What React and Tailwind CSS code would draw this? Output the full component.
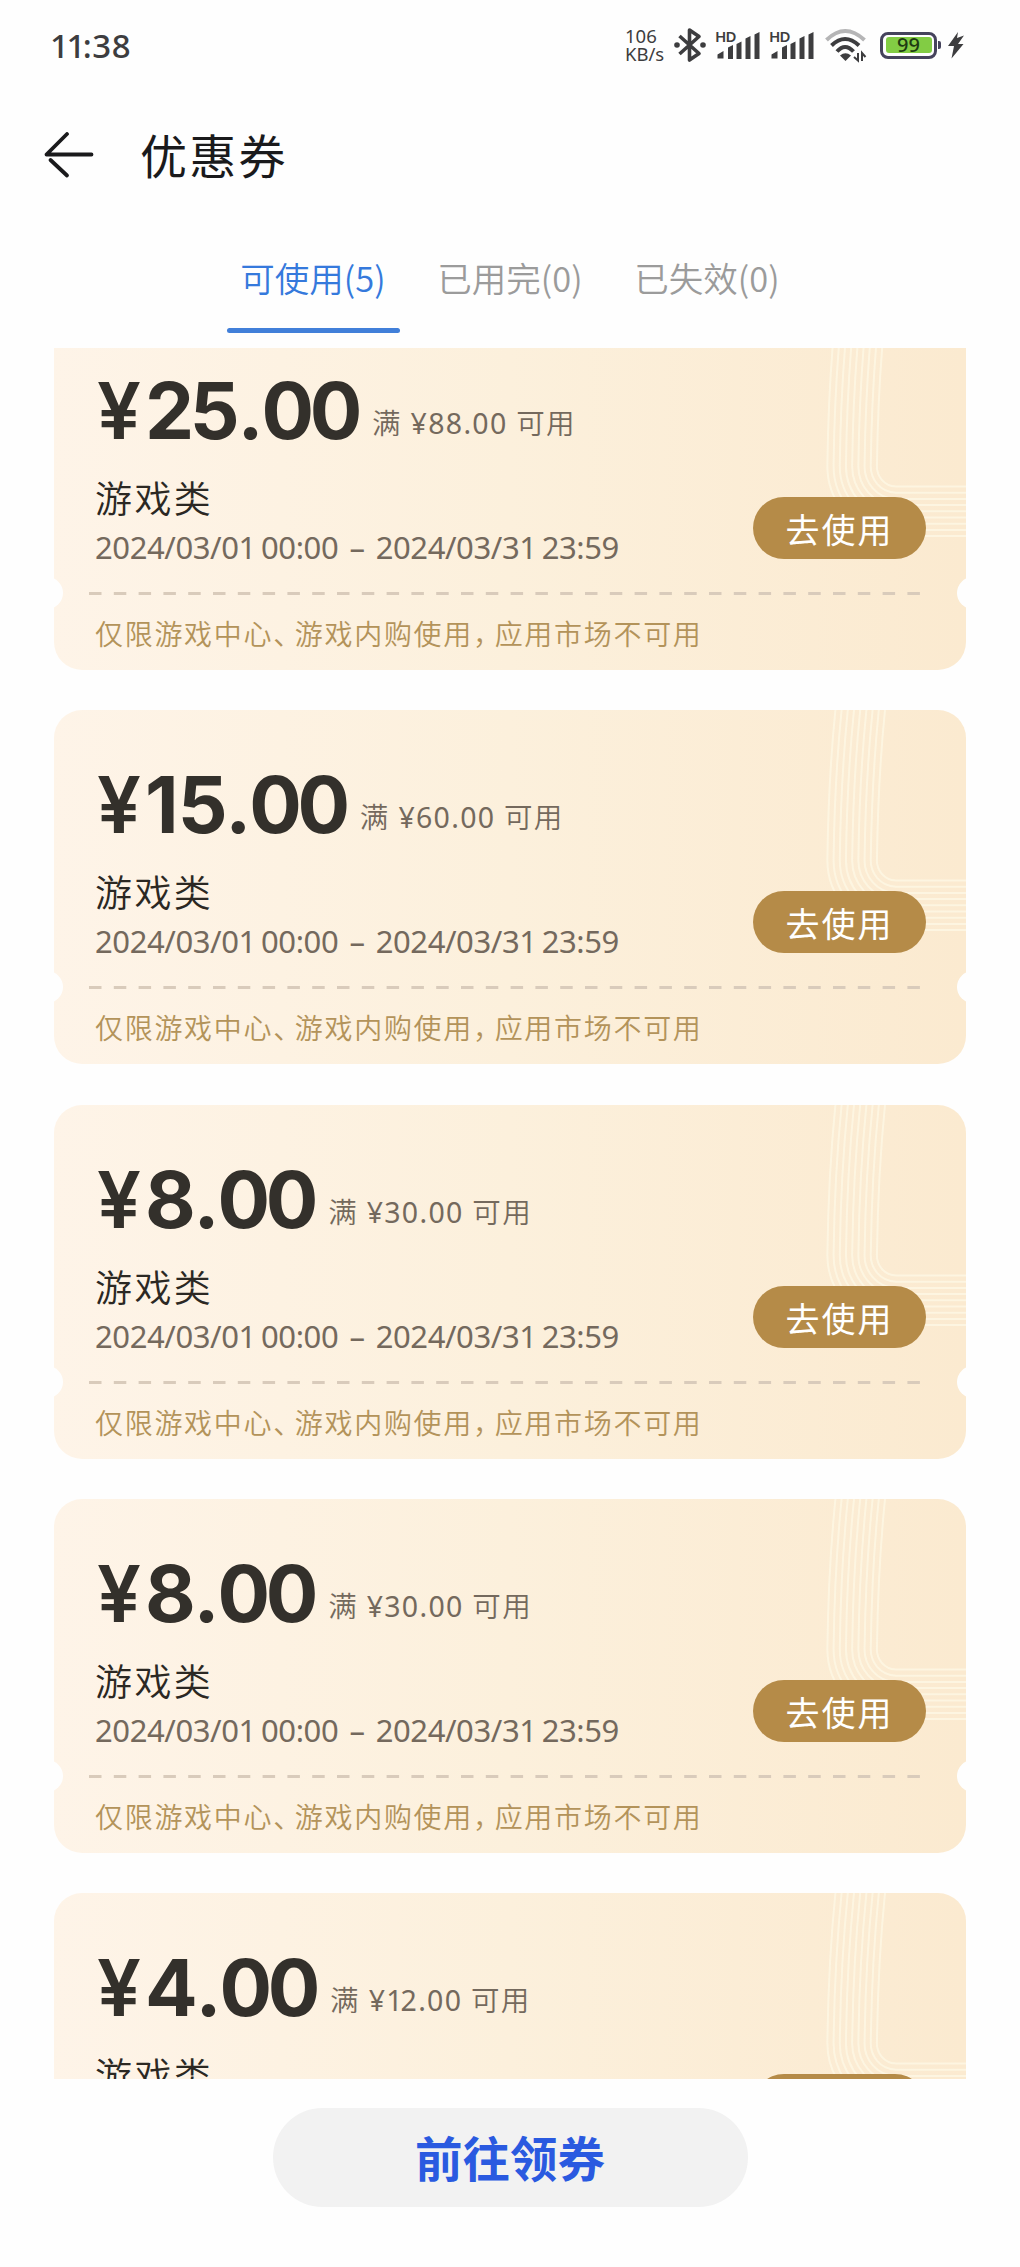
import React from "react";

const COUPONS = [
  { id: 1, amount: "25.00", min: "¥88.00" },
  { id: 2, amount: "15.00", min: "¥60.00" },
  { id: 3, amount: "8.00", min: "¥30.00" },
  { id: 4, amount: "8.00", min: "¥30.00" },
  { id: 5, amount: "4.00", min: "¥12.00" },
];

const TABS = [
  { label: "可使用(5)", active: true },
  { label: "已用完(0)", active: false },
  { label: "已失效(0)", active: false },
];

// Offsets of the parallel ribbon lines in the card corner
const RIBBON = [0, 1, 2, 3, 4, 5, 6, 7, 8];

// The digit 1 is set tighter than the other figures
const Figures = ({ text, tight }) =>
  text.split(/(1)/).map((part, i) =>
    part === "1" ? (
      <span key={i} className={tight}>
        1
      </span>
    ) : (
      part
    )
  );

const SignalIcon = () => (
  <svg className="overflow-visible" width="48" height="34" viewBox="0 0 48 34" fill="#3d3d3f">
    <text x="0" y="14" fontSize="15" fontWeight="600" fontFamily="Noto Sans, sans-serif" textLength="21.5">
      HD
    </text>
    <path d="M2.500 30.500v-4l6-3.500v7.500zM13 31v-11.500l5-2.500v14zM21.500 31v-15l5-2.500v17.500zM30.500 31v-20.500l5-2.500v23zM39.500 31v-24.500l5-2.500v27z" />
  </svg>
);

const StatusBar = () => (
  <div className="flex h-[90px] items-center justify-between pl-[50px] pr-[55px] text-[#3d3d3f]">
    <span className="text-[33px] font-medium leading-none tracking-[0.5px]">
      <Figures text="11:38" tight="tracking-[-2.500px]" />
    </span>
    <div className="flex h-[36px] items-center">
      <div className="mr-[7px] w-[42px] whitespace-nowrap text-[18.500px] leading-[18px]">
        <p>106</p>
        <p>KB/s</p>
      </div>
      <svg width="32" height="36" viewBox="0 0 32 36" fill="none" stroke="#3d3d3f" strokeWidth="3.600" strokeLinejoin="round">
        <path d="M5.500 9L25 26.500L15.500 33V3L25 9.500L5.500 27" />
        <circle cx="3" cy="18" r="2.800" fill="#3d3d3f" stroke="none" />
        <circle cx="29" cy="18" r="2.800" fill="#3d3d3f" stroke="none" />
      </svg>
      <div className="ml-[9px] flex gap-[6px]">
        <SignalIcon />
        <SignalIcon />
      </div>
      <svg className="ml-[8px]" width="42" height="36" viewBox="0 0 42 36" fill="none" strokeWidth="4">
        <path d="M1.500 13Q20 -5 39.500 13" stroke="#b5b5b6" />
        <path d="M6.500 18.500Q20 5.500 34 18.500" stroke="#3d3d3f" />
        <path d="M12 24.500Q20 15.500 28.500 24.500" stroke="#3d3d3f" />
        <path d="M15 28.500Q20.500 24 26 28.500L20.500 34z" fill="#3d3d3f" />
        <path d="M33 26v7.500l-4-3.500M37 34v-8l3.500 4" stroke="#3d3d3f" strokeWidth="2" />
      </svg>
      <div className="ml-[13px] flex h-[27px] w-[57px] items-center rounded-[8px] border-[3px] border-[#45435c] p-[2.500px]">
        <div className="flex h-full w-full items-center justify-center rounded-[3px] bg-[#82cc44] text-[20px] font-medium leading-none text-[#1d3b12]">
          99
        </div>
      </div>
      <div className="ml-[1px] h-[8px] w-[3px] rounded-r-[2px] bg-[#45435c]" />
      <svg className="ml-[6px]" width="18" height="30" viewBox="0 0 18 30" fill="#3d3d3f">
        <path d="M11 2L1 16h6L4.500 28.500L16.500 14h-5.500L17 5.500L10 8z" />
      </svg>
    </div>
  </div>
);

const Header = () => (
  <header className="flex h-[132px] items-center pl-[43px]">
    <svg width="52" height="48" viewBox="0 0 52 48" fill="none" stroke="#1a1a1c" strokeWidth="3.800" strokeLinecap="round" strokeLinejoin="round">
      <path d="M48.500 22.500H3.500L24 2" />
      <path d="M7.500 28L24 43.500" />
    </svg>
    <h1 className="ml-[45px] text-[47px] leading-none tracking-[2.200px] text-[#1a1a1c]">优惠券</h1>
  </header>
);

const Tabs = () => (
  <nav className="flex h-[126px] justify-center gap-[24px] font-['Noto_Sans_CJK_SC',sans-serif]">
    {TABS.map((tab) => (
      <div key={tab.label} className="flex h-[111px] w-[173px] flex-col items-center justify-between pt-[30px]">
        <span className={`text-[34.500px] font-[350] leading-[50px] ${tab.active ? "text-[#3579dc]" : "text-[#9b9b9b]"}`}>{tab.label}</span>
        {tab.active ? <span className="h-[5px] w-full rounded-full bg-[#417fd9]" /> : null}
      </div>
    ))}
  </nav>
);

const Ribbon = () => (
  <svg className="absolute right-0 top-0" width="140" height="230" viewBox="0 0 140 230" fill="none" stroke="#fdf6e2" strokeWidth="2" strokeOpacity="0.9">
    {RIBBON.map((n) => {
      const d = n * 6.2;
      return <path key={n} d={`M${59 - d} 0Q${52 - d} 70 ${51 - d} 148C${50 - d} ${160 + d * 0.5} ${58 - d * 0.6} ${170 + d} 70 ${170.5 + d}H140`} />;
    })}
  </svg>
);

const CouponCard = ({ coupon }) => {
  const [whole, cents] = coupon.amount.split(".");

  return (
    <article className="relative h-[354px] shrink-0 overflow-hidden rounded-[28px] bg-linear-to-r from-[#fef4e8] via-[#fcf0dc] to-[#fbead0] px-[41px] pt-[55px]">
      <Ribbon />
      <span className="absolute -left-[23px] top-[261px] h-[32px] w-[32px] rounded-full bg-[#fefefe]" />
      <span className="absolute -right-[23px] top-[261px] h-[32px] w-[32px] rounded-full bg-[#fefefe]" />

      <div className="flex items-end whitespace-nowrap">
        <p className="flex pl-[2px] font-['Inter',sans-serif] text-[78px] font-[650] leading-[80px] tracking-[-4.300px] text-[#33302b]">
          <span className="w-[48px] font-semibold">¥</span>
          <span>
            <Figures text={whole} tight="tracking-[-1px]" />
            <span className="ml-[2px] tracking-[-2px]">.</span>
            {cents}
          </span>
        </p>
        <p className="mb-[8px] ml-[14px] text-[28.500px] leading-[40px] tracking-[1.300px] text-[#74695d]">
          <span className="font-[350]">满</span> <Figures text={coupon.min} tight="tracking-[-2px]" /> <span className="font-[350]">可用</span>
        </p>
      </div>

      <div className="relative flex justify-between">
        <div className="whitespace-nowrap">
          <p className="mt-[25px] text-[37px] font-[350] leading-[46px] tracking-[2.400px] text-[#2b2823]">游戏类</p>
          <p className="mt-[5px] text-[31px] leading-[40px] tracking-[-0.400px] text-[#74695d]">
            <Figures text="2024/03/01 00:00" tight="tracking-[-3px]" />
            <span className="mx-[3.500px]"> – </span>
            <Figures text="2024/03/31 23:59" tight="tracking-[-3px]" />
          </p>
        </div>
        <button type="button" className="-mr-[1px] mt-[46px] h-[62px] w-[173px] rounded-full bg-[#b58b48] pt-[4px] text-[34px] leading-[58px] tracking-[2px] text-white">
          去使用
        </button>
      </div>

      <svg className="-ml-[6px] mt-[25px] block" width="832" height="3">
        <path d="M0 1.500H832" stroke="#d9cbbb" strokeWidth="3" strokeDasharray="12.500 12.300" />
      </svg>

      <p className="mt-[19px] whitespace-nowrap text-[28px] font-[350] leading-[40px] tracking-[1.700px] text-[#b3935a]">
        仅限游戏中心<span className="tracking-[-6.400px]">、</span>游戏内购使用<span className="tracking-[-6.400px]">，</span>应用市场不可用
      </p>
    </article>
  );
};

const App = () => (
  <div className="h-[2267px] w-[1020px] overflow-hidden bg-[#fefefe] font-['Noto_Sans','Noto_Sans_CJK_SC',sans-serif]">
    <StatusBar />
    <Header />
    <Tabs />
    <main className="h-[1731px] overflow-hidden px-[54px]">
      <div className="-mt-[32px] flex flex-col gap-[40.300px]">
        {COUPONS.map((coupon) => (
          <CouponCard key={coupon.id} coupon={coupon} />
        ))}
      </div>
    </main>
    <footer className="flex justify-center pt-[29px]">
      <button type="button" className="h-[99px] w-[475px] rounded-full bg-[#f2f2f2] pt-[3px] text-[47.500px] font-bold leading-none text-[#2a5ae0]">
        前往领券
      </button>
    </footer>
  </div>
);

export default App;
